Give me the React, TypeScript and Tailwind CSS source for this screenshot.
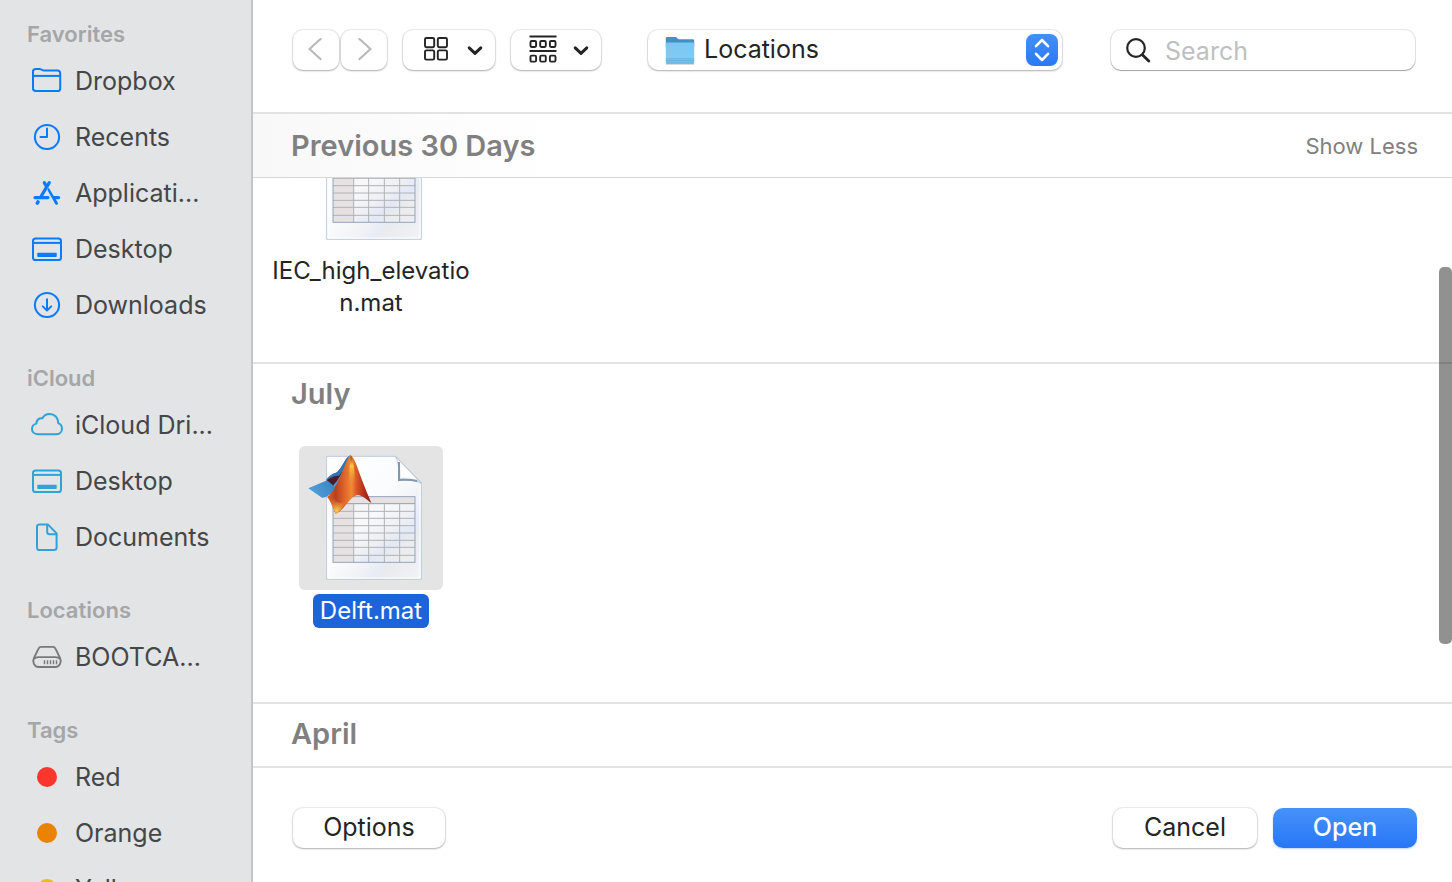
import React from "react";

function FolderIcon() {
  return (
    <svg width="32" height="30" viewBox="0 0 32 30" fill="none" stroke="currentColor" strokeWidth="2" aria-hidden="true">
      <path d="M2 22.300V5.600C2 3.600 3 2.900 4.600 2.900H8.500c2.200 0 2.400 1.700 4.400 1.700h13.500c1.800 0 2.800 1 2.800 2.800v15c0 1.800-.9 2.700-2.700 2.700H4.700C2.900 25.100 2 24.100 2 22.300z" />
      <path d="M2 9.900h27.200" />
    </svg>
  );
}

function ClockIcon() {
  return (
    <svg width="28" height="28" viewBox="0 0 28 28" fill="none" stroke="currentColor" strokeWidth="2" strokeLinecap="round" strokeLinejoin="round" aria-hidden="true">
      <circle cx="14" cy="14" r="12.100" />
      <path d="M14 5.500V14H7.500" />
    </svg>
  );
}

function AppsIcon() {
  return (
    <svg width="28" height="26" viewBox="0 0 28 26" fill="none" stroke="currentColor" strokeWidth="3.200" strokeLinecap="round" aria-hidden="true">
      <path d="M11.300 2.600L13.500 6.500" />
      <path d="M16.300 2.600L7.900 16.800" />
      <path d="M2 17.600H15" />
      <path d="M5 22L4.300 23.100" strokeWidth="3.600" />
      <path d="M14.900 8.200C15.300 7.700 15.900 7.900 16.200 8.500L24.700 22.400C25.300 23.500 24.900 24.300 24.300 24.600C23.600 25 22.700 24.800 22.200 23.900L15.200 11.500C14.500 10.200 14.300 9 14.900 8.200z" fill="currentColor" stroke="none" />
      <path d="M21.500 17.600H25.600" />
    </svg>
  );
}

function DesktopIcon() {
  return (
    <svg width="32" height="26" viewBox="0 0 32 26" fill="none" stroke="currentColor" strokeWidth="2" aria-hidden="true">
      <rect x="2" y="2.500" width="28" height="21.500" rx="2.600" />
      <path d="M2 6.900h28" />
      <rect x="6.300" y="16.700" width="19.400" height="4.400" rx="0.800" fill="currentColor" stroke="none" />
    </svg>
  );
}

function DownloadIcon() {
  return (
    <svg width="28" height="28" viewBox="0 0 28 28" fill="none" stroke="currentColor" strokeWidth="2" strokeLinecap="round" strokeLinejoin="round" aria-hidden="true">
      <circle cx="14" cy="14" r="12.100" />
      <path d="M14 8.200V19.400M9.800 15.400L14 19.600L18.200 15.400" />
    </svg>
  );
}

function CloudIcon() {
  return (
    <svg width="34" height="28" viewBox="0 0 34 28" fill="none" stroke="currentColor" strokeWidth="2" strokeLinejoin="round" aria-hidden="true">
      <path d="M8.300 23.300C4.600 23.300 2 21.100 2 17.900c0-2.700 1.600-4.600 4.400-5.300C6.500 8.900 9 6.800 12.400 7.300 13.800 4.500 16.500 3 19.600 3c5 0 8.700 3.800 8.600 9.100 2.300.9 3.800 2.900 3.800 5.300 0 3.500-2.600 5.900-6.100 5.900z" />
    </svg>
  );
}

function DocumentIcon() {
  return (
    <svg width="24" height="30" viewBox="0 0 24 30" fill="none" stroke="currentColor" strokeWidth="2" strokeLinejoin="round" aria-hidden="true">
      <path d="M4.600 2.400h8.200L21.600 11.400v14.200c0 1.700-.9 2.500-2.600 2.500H4.600C2.900 28.100 2 27.300 2 25.600V4.900c0-1.700.9-2.500 2.600-2.500z" />
      <path d="M12.200 2.600v7.300c0 1.500.8 2.300 2.300 2.300h7" />
    </svg>
  );
}

function DriveIcon() {
  return (
    <svg width="32" height="24" viewBox="0 0 32 24" fill="none" stroke="currentColor" strokeWidth="1.900" strokeLinejoin="round" aria-hidden="true">
      <path d="M7.400 3.800C8 2.400 8.900 1.900 10.300 1.900h11.400c1.400 0 2.300.5 2.900 1.900l4.500 9.300c1.700 3.500-.2 8.900-4.700 8.900H7.600c-4.500 0-6.400-5.400-4.700-8.900z" />
      <path d="M2.900 14c1-1.300 2.500-1.900 4.700-1.900h16.800c2.200 0 3.700.6 4.700 1.900" />
      <path d="M13.500 15.200v4M16.500 15.200v4M19.500 15.200v4M22.500 15.200v4M25.500 15.200v4" strokeWidth="1.400" />
    </svg>
  );
}

function Tag({ className = "" }: { className?: string }) {
  return <span className={`block size-5 rounded-full ${className}`} />;
}

function ChevronDown() {
  return (
    <svg width="16" height="12" viewBox="0 0 16 12" fill="none" stroke="currentColor" strokeWidth="3" strokeLinecap="round" strokeLinejoin="round" aria-hidden="true">
      <path d="M2.200 3.800L8 9.400L13.800 3.800" />
    </svg>
  );
}

function GridIcon() {
  return (
    <svg width="26" height="28" viewBox="0 0 26 28" fill="none" stroke="currentColor" strokeWidth="1.900" aria-hidden="true">
      <rect x="2" y="2" width="9.200" height="9.200" rx="1.400" />
      <rect x="14.800" y="2" width="9.200" height="9.200" rx="1.400" />
      <rect x="2" y="14.400" width="9.200" height="9.200" rx="1.400" />
      <rect x="14.800" y="14.400" width="9.200" height="9.200" rx="1.400" />
    </svg>
  );
}

function GroupIcon() {
  return (
    <svg width="28" height="30" viewBox="0 0 28 30" fill="none" stroke="currentColor" strokeWidth="1.900" aria-hidden="true">
      <path d="M0.500 1.500h27M0.500 16h27" />
      {[6, 20.6].map((y) => (
        <g key={y}>
          <rect x="1.500" y={y} width="5.600" height="6" rx="1.200" />
          <rect x="11.200" y={y} width="5.600" height="6" rx="1.200" />
          <rect x="20.900" y={y} width="5.600" height="6" rx="1.200" />
        </g>
      ))}
    </svg>
  );
}

function BlueFolder() {
  return (
    <svg width="30" height="30" viewBox="0 0 30 30" aria-hidden="true">
      <defs>
        <linearGradient id="folder-front" x1="0" y1="0" x2="0" y2="1">
          <stop offset="0" stopColor="#7ac6f2" />
          <stop offset="0.800" stopColor="#81cbf5" />
          <stop offset="1" stopColor="#69b7e3" />
        </linearGradient>
      </defs>
      <path d="M1 28.700h28" stroke="#a9b1b8" strokeWidth="1.500" />
      <path d="M.8 3.500c0-1 .5-1.500 1.500-1.500h8.200c1.700 0 1.900 2.300 3.800 2.300h13.400c1 0 1.500.6 1.500 1.600V12H.8z" fill="#4391c2" />
      <path d="M.8 9.200c0-1.200.5-1.700 1.500-1.700h25.400c1 0 1.500.5 1.500 1.700v17.500c0 1-.5 1.500-1.500 1.500H2.300c-1 0-1.500-.5-1.500-1.500z" fill="url(#folder-front)" />
      <path d="M.8 23.700h28.400M.8 25.400h28.400" stroke="#5eabd9" strokeWidth="0.700" />
    </svg>
  );
}

function MatFileIcon({ id }: { id: string }) {
  const rows = [244, 265, 287, 309, 331, 352, 376];
  const columns = [221, 266, 313, 359];
  return (
    <svg className="block size-36" viewBox="57 48 432 432" aria-hidden="true">
      <defs>
        <linearGradient id={`${id}-page`} x1="0" y1="0" x2="1" y2="1">
          <stop offset="0" stopColor="#ffffff" />
          <stop offset="0.450" stopColor="#fbfcfd" />
          <stop offset="0.650" stopColor="#f0f2f6" />
          <stop offset="0.740" stopColor="#e6ecf6" />
          <stop offset="0.780" stopColor="#e9ebee" />
          <stop offset="1" stopColor="#f1f3f6" />
        </linearGradient>
        <linearGradient id={`${id}-table`} x1="0" y1="0" x2="1" y2="1">
          <stop offset="0" stopColor="#f0eff1" />
          <stop offset="0.400" stopColor="#f8f8fa" />
          <stop offset="0.600" stopColor="#eef0f4" />
          <stop offset="0.720" stopColor="#e2e8f5" />
          <stop offset="0.820" stopColor="#eaecee" />
          <stop offset="1" stopColor="#eceef0" />
        </linearGradient>
        <linearGradient id={`${id}-fold`} x1="0" y1="1" x2="1" y2="0">
          <stop offset="0" stopColor="#c3d1dd" />
          <stop offset="0.500" stopColor="#ffffff" />
          <stop offset="1" stopColor="#b9c8d6" />
        </linearGradient>
        <linearGradient id={`${id}-peak`} x1="140" y1="0" x2="274" y2="0" gradientUnits="userSpaceOnUse">
          <stop offset="0" stopColor="#d9672c" />
          <stop offset="0.200" stopColor="#b8401f" />
          <stop offset="0.400" stopColor="#df652b" />
          <stop offset="0.560" stopColor="#f08a36" />
          <stop offset="0.660" stopColor="#dc5a28" />
          <stop offset="0.820" stopColor="#b7301c" />
          <stop offset="1" stopColor="#8e1f17" />
        </linearGradient>
        <linearGradient id={`${id}-glow`} x1="0" y1="76" x2="0" y2="165" gradientUnits="userSpaceOnUse">
          <stop offset="0" stopColor="#a3361a" />
          <stop offset="0.350" stopColor="#fbc944" />
          <stop offset="1" stopColor="#f08a30" stopOpacity="0" />
        </linearGradient>
        <radialGradient id={`${id}-foot`} cx="170" cy="242" r="42" gradientUnits="userSpaceOnUse">
          <stop offset="0" stopColor="#fbcf4e" />
          <stop offset="1" stopColor="#ea7c33" stopOpacity="0" />
        </radialGradient>
        <linearGradient id={`${id}-wing`} x1="85" y1="175" x2="205" y2="90" gradientUnits="userSpaceOnUse">
          <stop offset="0" stopColor="#4f9fd8" />
          <stop offset="0.450" stopColor="#3c86c4" />
          <stop offset="0.700" stopColor="#275b92" />
          <stop offset="1" stopColor="#5b9bc6" />
        </linearGradient>
      </defs>

      <path d="M140 79H347L424 158V448H140z" fill={`url(#${id}-page)`} stroke="#bccbe2" strokeWidth="3" />
      <path d="M144 83V444H420V162" fill="none" stroke="#ffffff" strokeWidth="3" />
      <path d="M347 80C356 98 358 122 356 151C382 149 407 150 424 160z" fill={`url(#${id}-fold)`} stroke="#9fb3c8" strokeWidth="2" />
      <path d="M357 96V150C376 149 394 149 412 153" fill="none" stroke="#7f98b1" strokeWidth="6" />
      <path d="M362 102L404 144C388 142 374 142 362 144z" fill="#ffffff" />

      <rect x="159" y="200" width="246" height="197" fill={`url(#${id}-table)`} />
      <path d="M159 200H405V221H221V397H159z" fill="#e6e1e3" />
      <path d="M159 221H405" stroke="#9b9da3" strokeWidth="3" />
      {rows.map((y) => (
        <path key={y} d={`M159 ${y}H405`} stroke="#b0b2b5" strokeWidth="3" />
      ))}
      {columns.map((x) => (
        <path key={x} d={`M${x} 221V397`} stroke="#b0b2b5" strokeWidth="3" />
      ))}
      <rect x="159" y="200" width="246" height="197" fill="none" stroke="#94a3be" strokeWidth="3" />

      <path d="M85 175L138 152C146 137 158 132 171 127C187 114 196 80 212 76C204 100 182 160 160 186C148 195 135 205 126 203z" fill={`url(#${id}-wing)`} />
      <path d="M140 150C150 142 163 140 172 134C182 122 190 108 197 96C190 122 176 152 162 168z" fill="#4a1c2c" />
      <path d="M138 152C146 137 158 132 171 127C187 114 196 80 212 76C204 92 192 122 176 138C164 134 149 143 138 152z" fill="#3674ae" />
      <path d="M162 168C178 152 198 112 211 78" fill="none" stroke="#4f9ad0" strokeWidth="6" />
      <path d="M212 76C222 80 232 112 244 145C254 172 264 196 274 219C258 207 244 193 231 196C207 202 192 243 167 251C159 238 153 212 141 201C150 194 158 184 166 170C186 136 200 84 212 76z" fill={`url(#${id}-peak)`} />
      <path d="M212 76C220 84 223 116 225 165L205 168C209 132 208 100 212 76z" fill={`url(#${id}-glow)`} />
      <path d="M141 201C150 194 160 198 168 212C178 222 190 218 200 214C189 230 180 247 167 251C159 238 153 212 141 201z" fill={`url(#${id}-foot)`} />
    </svg>
  );
}

type Item = { label: string; icon: React.ReactNode };
type Group = { title: string; color: string; items: Item[] };

const groups: Group[] = [
  {
    title: "Favorites",
    color: "text-[#0a7aff]",
    items: [
      { label: "Dropbox", icon: <FolderIcon /> },
      { label: "Recents", icon: <ClockIcon /> },
      { label: "Applicati...", icon: <AppsIcon /> },
      { label: "Desktop", icon: <DesktopIcon /> },
      { label: "Downloads", icon: <DownloadIcon /> },
    ],
  },
  {
    title: "iCloud",
    color: "text-[#2fa3d7]",
    items: [
      { label: "iCloud Dri...", icon: <CloudIcon /> },
      { label: "Desktop", icon: <DesktopIcon /> },
      { label: "Documents", icon: <DocumentIcon /> },
    ],
  },
  {
    title: "Locations",
    color: "text-[#77797b]",
    items: [{ label: "BOOTCA...", icon: <DriveIcon /> }],
  },
  {
    title: "Tags",
    color: "",
    items: [
      { label: "Red", icon: <Tag className="bg-[#fb372d]" /> },
      { label: "Orange", icon: <Tag className="bg-[#e98300]" /> },
      { label: "Yellow", icon: <Tag className="bg-[#eabc0c]" /> },
    ],
  },
];

function Sidebar() {
  return (
    <nav aria-label="Places" className="flex w-[253px] shrink-0 flex-col gap-[26px] overflow-hidden border-r-2 border-[#c4c5c7] bg-[#e2e4e6] pt-[15px]">
      {groups.map((group) => (
        <section key={group.title} className="shrink-0">
          <h2 className="flex h-[38px] items-center pl-[27px] text-[22px] font-semibold text-[#a4a6a8]">{group.title}</h2>
          <ul>
            {group.items.map((item) => (
              <li key={item.label}>
                <a href="#" className="flex h-14 items-center gap-2 pl-[27px] text-[25px] text-[#454648]">
                  <span className={`flex w-10 justify-center ${group.color}`}>{item.icon}</span>
                  <span className="pt-0.5">{item.label}</span>
                </a>
              </li>
            ))}
          </ul>
        </section>
      ))}
    </nav>
  );
}

function ToolButton({ label, className = "", children }: { label?: string; className?: string; children: React.ReactNode }) {
  return (
    <button
      type="button"
      aria-label={label}
      className={`flex h-10 items-center justify-center rounded-[10px] bg-white text-[#242424] shadow-[0_0_1px_1px_rgba(0,0,0,0.08),0_1px_2px_rgba(0,0,0,0.26)] ${className}`}
    >
      {children}
    </button>
  );
}

function Toolbar() {
  return (
    <header className="flex h-[114px] shrink-0 items-start border-b-2 border-[#e3e3e3] pt-[30px] pr-[37px] pl-10">
      <div className="flex gap-0.5">
        <ToolButton label="Back" className="w-[46px] pr-0.5 text-[#b9b9b9]!">
          <svg width="14" height="26" viewBox="0 0 14 26" fill="none" stroke="currentColor" strokeWidth="2.200" strokeLinecap="round" strokeLinejoin="round" aria-hidden="true">
            <path d="M12.500 2L1.500 12L12.500 22" />
          </svg>
        </ToolButton>
        <ToolButton label="Forward" className="w-[46px] pl-0.5 text-[#b9b9b9]!">
          <svg width="14" height="26" viewBox="0 0 14 26" fill="none" stroke="currentColor" strokeWidth="2.200" strokeLinecap="round" strokeLinejoin="round" aria-hidden="true">
            <path d="M1.500 2L12.500 12L1.500 22" />
          </svg>
        </ToolButton>
      </div>
      <ToolButton label="View as icons" className="ml-4 w-[92px] gap-[18px] pl-2">
        <GridIcon />
        <ChevronDown />
      </ToolButton>
      <ToolButton label="Group items" className="ml-4 w-[90px] gap-4 pl-1.5">
        <GroupIcon />
        <ChevronDown />
      </ToolButton>
      <div className="relative ml-[47px] flex h-10 min-w-0 flex-[414] items-center">
        <select
          aria-label="Location"
          className="h-10 w-full appearance-none rounded-[10px] bg-white pl-14 text-[25px] text-[#242424] shadow-[0_0_1px_1px_rgba(0,0,0,0.08),0_1px_2px_rgba(0,0,0,0.26)]"
        >
          <option>Locations</option>
        </select>
        <span className="pointer-events-none absolute left-[17px]">
          <BlueFolder />
        </span>
        <span className="pointer-events-none absolute right-1 flex size-8 items-center justify-center rounded-lg bg-linear-to-b from-[#4390f8] to-[#2a78f6]">
          <svg width="18" height="24" viewBox="0 0 18 24" fill="none" stroke="#ffffff" strokeWidth="2.600" strokeLinecap="round" strokeLinejoin="round" aria-hidden="true">
            <path d="M3 8.200L9 2L15 8.200M3 15.800L9 22L15 15.800" />
          </svg>
        </span>
      </div>
      <div className="relative ml-[49px] flex h-10 min-w-0 flex-[304] items-center">
        <input
          type="search"
          aria-label="Search"
          placeholder="Search"
          className="h-10 w-full rounded-[10px] bg-white pt-0.5 pl-[54px] text-[25px] text-[#242424] shadow-[0_0_0_1px_rgba(0,0,0,0.09),0_1px_1px_rgba(0,0,0,0.3)] placeholder:text-[#bfbfbf]"
        />
        <svg className="pointer-events-none absolute left-3.5" width="26" height="26" viewBox="0 0 26 26" fill="none" stroke="#242424" strokeLinecap="round" aria-hidden="true">
          <circle cx="11" cy="11" r="8.800" strokeWidth="2.200" />
          <path d="M17.600 17.900L23.800 24" strokeWidth="2.800" />
        </svg>
      </div>
    </header>
  );
}

function FileTile({ id, name, selected = false }: { id: string; name: string; selected?: boolean }) {
  return (
    <button type="button" aria-pressed={selected} className="flex w-[208px] shrink-0 flex-col items-center gap-1">
      <span className={`block rounded-md ${selected ? "bg-[#e4e4e4]" : ""}`}>
        <MatFileIcon id={id} />
      </span>
      <span
        className={`max-w-full rounded-md py-px text-[24px] leading-8 break-all ${
          selected ? "bg-[#1d63da] px-[7px] text-white" : "px-0.5 text-[#242424]"
        }`}
      >
        {name}
      </span>
    </button>
  );
}

function SectionTitle({ children }: { children: React.ReactNode }) {
  return <h2 className="text-[29px] leading-9 font-semibold text-[#808080]">{children}</h2>;
}

function Browser() {
  return (
    <main className="relative min-h-0 flex-1 overflow-hidden">
      <section>
        <div className="flex h-16 items-center justify-between border-b border-[#d6d6d6] bg-linear-to-r from-[#f8f8f8] via-white via-25% to-white pt-px pr-[34px] pl-[38px]">
          <SectionTitle>Previous 30 Days</SectionTitle>
          <button type="button" className="text-[22px] text-[#808080]">
            Show Less
          </button>
        </div>
        <div className="flex h-[184px] items-end overflow-hidden pb-[42px] pl-3.5">
          <FileTile id="iec" name="IEC_high_elevation.mat" />
        </div>
      </section>
      <section className="h-[340px] border-t-2 border-[#e3e3e3]">
        <div className="flex h-[60px] items-center pl-[38px]">
          <SectionTitle>July</SectionTitle>
        </div>
        <div className="flex pt-[22px] pl-3.5">
          <FileTile id="delft" name="Delft.mat" selected />
        </div>
      </section>
      <section className="border-t-2 border-[#e3e3e3]">
        <div className="flex h-[60px] items-center pl-[38px]">
          <SectionTitle>April</SectionTitle>
        </div>
      </section>
      <div className="absolute top-[153px] right-0 h-[377px] w-[13px] rounded-[5px] bg-black/43" />
    </main>
  );
}

export default function App() {
  return (
    <div className="flex h-screen overflow-hidden bg-white font-['Inter','Liberation_Sans',sans-serif]">
      <Sidebar />
      <div className="flex min-w-0 flex-1 flex-col">
        <Toolbar />
        <Browser />
        <footer className="flex h-[116px] shrink-0 items-start border-t-2 border-[#e3e3e3] pt-10 pr-[35px] pl-10 text-[25px]">
          <ToolButton className="w-[152px]">Options</ToolButton>
          <div className="ml-auto flex gap-4">
            <ToolButton className="w-36">Cancel</ToolButton>
            <button
              type="submit"
              className="flex h-10 w-36 items-center justify-center rounded-[10px] bg-linear-to-b from-[#4592f9] to-[#2976f6] font-medium text-white shadow-[0_1px_2px_rgba(41,118,246,0.3)]"
            >
              Open
            </button>
          </div>
        </footer>
      </div>
    </div>
  );
}
